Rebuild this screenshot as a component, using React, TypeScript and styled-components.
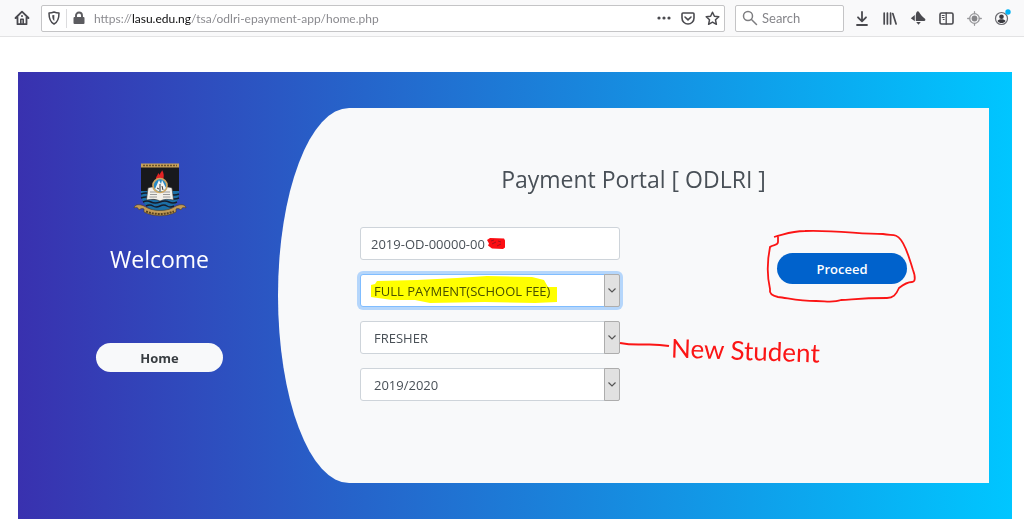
import React, { useState } from "react";
import styled, { createGlobalStyle } from "styled-components";

const GlobalStyle = createGlobalStyle`
  *, *::before, *::after { box-sizing: border-box; }
  body {
    margin: 0;
    background: #fff;
    color: #495057;
    font-family: "Open Sans", "Noto Sans", sans-serif;
  }
  button, input, select { font-family: inherit; margin: 0; }
`;

/* Browser toolbar */

const Toolbar = styled.header`
  display: flex;
  align-items: center;
  height: 37px;
  padding: 0 8px 0 11px;
  background: #f9f9fa;
  border-bottom: 1px solid #e3e3e4;
`;

const IconButton = styled.button<{ $width?: number }>`
  display: flex;
  align-items: center;
  justify-content: center;
  flex: none;
  width: ${(p) => p.$width ?? 28}px;
  height: 26px;
  padding: 0;
  border: 0;
  background: none;
  color: #4a4a4f;
`;

const BarField = styled.div`
  display: flex;
  align-items: center;
  height: 27px;
  border: 1px solid #c4c4c6;
  border-radius: 2px;
  background: #fff;
`;

const AddressBar = styled(BarField)`
  flex: 1;
  min-width: 0;
  margin-left: 8px;
`;

const SearchBar = styled(BarField)`
  flex: none;
  width: 109px;
  margin: 0 4px 0 10px;
  padding-left: 6px;
  color: #7d7d80;
`;

const Divider = styled.span`
  width: 1px;
  height: 19px;
  background: #dcdcde;
`;

const BarInput = styled.input`
  flex: 1;
  min-width: 0;
  height: 24px;
  margin-left: 4px;
  padding: 0;
  border: 0;
  outline: 0;
  background: none;
  font-family: Lato, "Open Sans", sans-serif;
  font-size: 13px;
  color: #85858a;
  &::placeholder { color: #85858a; opacity: 1; }
`;

const UrlInput = styled(BarInput)`
  font-size: 12px;
  background: linear-gradient(90deg, #85858a 38px, #0c0c0d 38px, #0c0c0d 97px, #85858a 97px);
  -webkit-background-clip: text;
  background-clip: text;
  -webkit-text-fill-color: transparent;
`;

/* Page */

const Page = styled.main`
  padding: 35px 12px 13px 18px;
`;

const Hero = styled.div`
  display: flex;
  padding: 36px 23px 36px 23px;
  background: linear-gradient(to right, #3931af, #00c6ff);
`;

const Sidebar = styled.aside`
  display: flex;
  flex-direction: column;
  align-items: center;
  flex: none;
  width: 237px;
  padding-top: 55px;
`;

const Welcome = styled.h2`
  margin: 26px 0 68px;
  color: #fff;
  font-size: 23px;
  font-weight: 400;
  line-height: 32px;
`;

const PillButton = styled.button<{ $primary?: boolean }>`
  width: ${(p) => (p.$primary ? 130 : 127)}px;
  height: ${(p) => (p.$primary ? 31 : 29)}px;
  padding: 0;
  border: 0;
  border-radius: 24px;
  background: ${(p) => (p.$primary ? "#0062cc" : "#f8f9fa")};
  color: ${(p) => (p.$primary ? "#fff" : "#383d41")};
  font-size: 13px;
  font-weight: ${(p) => (p.$primary ? 600 : 700)};
`;

const Card = styled.section`
  flex: 1;
  min-width: 0;
  padding: 55px 82px 82px;
  background: #f8f9fa;
  border-top-left-radius: 10% 50%;
  border-bottom-left-radius: 10% 50%;
`;

const Title = styled.h3`
  margin: 0 0 32px;
  color: #495057;
  font-size: 23px;
  font-weight: 400;
  line-height: 32px;
  text-align: center;
`;

const Form = styled.form`
  display: flex;
  justify-content: space-between;
  align-items: flex-start;
`;

const Fields = styled.div`
  display: grid;
  gap: 14px;
  width: 260px;
`;

const Field = styled.div`
  position: relative;
  height: 33px;
`;

const TextBox = styled.input`
  width: 100%;
  height: 33px;
  padding: 0 10px;
  border: 1px solid #ced4da;
  border-radius: 3px;
  outline: 0;
  background: #fff;
  color: #495057;
  font-size: 13px;
`;

const Select = styled.select<{ $focused?: boolean }>`
  appearance: none;
  width: 100%;
  height: 33px;
  padding: 0 24px 0 13px;
  border: 1px solid ${(p) => (p.$focused ? "#80bdff" : "#ced4da")};
  border-radius: 3px;
  outline: 0;
  box-shadow: ${(p) => (p.$focused ? "0 0 0 3px #b5d6fb" : "none")};
  background: #fff;
  color: #495057;
  font-size: 13px;
`;

const Arrow = styled.span`
  position: absolute;
  top: 0;
  right: 0;
  display: flex;
  align-items: center;
  justify-content: center;
  width: 16px;
  height: 33px;
  border: 1px solid #adadad;
  border-radius: 0 2px 2px 0;
  background: #e1e1e1;
  pointer-events: none;
`;

const ProceedArea = styled.div`
  position: relative;
  margin-top: 26px;
  display: flex;
`;

/* Pen marks lying over the form */

const Mark = styled.svg<{ $left: number; $top: number; $multiply?: boolean }>`
  position: absolute;
  left: ${(p) => p.$left}px;
  top: ${(p) => p.$top}px;
  overflow: visible;
  pointer-events: none;
  mix-blend-mode: ${(p) => (p.$multiply ? "multiply" : "normal")};
`;

const Note = styled.span`
  position: absolute;
  left: 311px;
  top: 13px;
  color: #fb1515;
  font-family: Lato, sans-serif;
  font-size: 26px;
  font-weight: 400;
  line-height: 32px;
  white-space: nowrap;
  transform: rotate(2deg);
  pointer-events: none;
`;

const line = { fill: "none", stroke: "currentColor", strokeLinecap: "round", strokeLinejoin: "round" } as const;

const HomeIcon = () => (
  <svg width="16" height="16" viewBox="0 0 16 16" {...line} strokeWidth="1.8">
    <path d="M1.5 8 8 1.7 14.5 8M3.5 7.5v6.7h9V7.5" />
    <path d="M6.8 14V9.3h2.4V14" strokeWidth="1.6" />
    <path d="M8 5.8v.4" />
  </svg>
);

const ShieldIcon = () => (
  <svg width="12" height="14" viewBox="0 0 12 14" {...line} strokeWidth="1.5">
    <path d="M6 1c1.500.6 3 .9 5 .9C11 8 9.800 11 6 13 2.200 11 1 8 1 1.900c2 0 3.500-.3 5-.9Z" />
    <path d="M6.300 4v6C4.700 9 4.200 7 4.200 4.300Z" fill="currentColor" stroke="none" />
  </svg>
);

const LockIcon = () => (
  <svg width="12" height="14" viewBox="0 0 12 14">
    <path d="M3 7V4.500a3 3 0 0 1 6 0V7" {...line} strokeWidth="1.900" stroke="#5c5c60" />
    <rect x="0.500" y="6" width="11" height="7" rx="1" fill="#5c5c60" />
  </svg>
);

const DotsIcon = () => (
  <svg width="14" height="4" viewBox="0 0 14 4" fill="currentColor">
    <circle cx="2" cy="2" r="1.600" /><circle cx="7" cy="2" r="1.600" /><circle cx="12" cy="2" r="1.600" />
  </svg>
);

const PocketIcon = () => (
  <svg width="14" height="13" viewBox="0 0 14 13" {...line} strokeWidth="1.600">
    <path d="M2 1h10a1 1 0 0 1 1 1v4a6 6 0 0 1-12 0V2a1 1 0 0 1 1-1Z" />
    <path d="M4 5l3 2.800L10 5" />
  </svg>
);

const StarIcon = () => (
  <svg width="15" height="15" viewBox="0 0 15 15" {...line} strokeWidth="1.500">
    <path d="m7.500 1.200 1.900 4.100 4.400.5-3.300 3 .9 4.500-3.900-2.200-3.900 2.200.9-4.500-3.300-3 4.400-.5Z" />
  </svg>
);

const SearchIcon = () => (
  <svg width="16" height="16" viewBox="0 0 16 16" {...line} strokeWidth="1.500">
    <circle cx="6" cy="6" r="4.500" /><path d="m9.500 9.500 5 5" />
  </svg>
);

const DownloadIcon = () => (
  <svg width="12" height="15" viewBox="0 0 12 15" {...line} strokeWidth="1.800">
    <path d="M6 1v9M2 6.300l4 4 4-4M1 14h10" />
  </svg>
);

const LibraryIcon = () => (
  <svg width="14" height="13" viewBox="0 0 14 13" {...line} strokeWidth="1.700">
    <path d="M1.200 1v11M4.400 1v11M7.600 1v11M9.800 1.500l3.300 10.500" />
  </svg>
);

const BellIcon = () => (
  <svg width="16" height="16" viewBox="0 0 16 16" fill="currentColor">
    <path d="M6.500 2.300c.6-1.300 2-1.300 2.500-.3 1.800 3 3.400 4.500 6 6.700.8.800.3 2.300-.8 2.300H5.800V5c.2-1 .3-1.900.7-2.700Z" />
    <path d="M4.800 5v6.300L.8 8.200ZM6.200 12h4.600L8.500 14.800Z" />
  </svg>
);

const SidebarIcon = () => (
  <svg width="15" height="13" viewBox="0 0 15 13" {...line} strokeWidth="1.600">
    <rect x="1" y="1" width="13" height="11" rx="1.500" />
    <path d="M7.200 1v11" strokeWidth="1.300" />
    <path d="M3.200 3.500h2M3.200 5.500h2M4.200 7.500h1" strokeWidth="1" />
  </svg>
);

const TargetIcon = () => (
  <svg width="15" height="15" viewBox="0 0 15 15" {...line} stroke="#98989b" strokeWidth="1.300">
    <circle cx="7.500" cy="7.500" r="4.800" />
    <circle cx="7.500" cy="7.500" r="2.900" fill="#858588" stroke="none" />
    <path d="M7.500.7v2M7.500 12.300v2M.7 7.500h2M12.300 7.500h2" />
  </svg>
);

const AccountIcon = () => (
  <svg width="18" height="18" viewBox="0 0 18 18">
    <circle cx="8.500" cy="9.500" r="6" fill="none" stroke="#6a6a6f" strokeWidth="1.200" />
    <circle cx="8.500" cy="7.800" r="2.300" fill="#3a3a3f" />
    <path d="M4.500 12c.7-1.300 2-1.800 4-1.800s3.300.5 4 1.800c-1 1.500-2.300 2-4 2s-3-.5-4-2Z" fill="#3a3a3f" />
    <circle cx="15" cy="3" r="2.700" fill="#00b3f4" />
  </svg>
);

const Crest = () => (
  <svg width="54" height="54" viewBox="0 0 54 54" role="img" aria-label="University crest">
    <path d="M8 4h38v26c0 10-8 17-19 20C16 47 8 40 8 30Z" fill="#18191c" />
    <path d="M8 28h38v3c0 9-7 16-19 19C15 47 8 40 8 31Z" fill="#1c6fa6" />
    <g fill="none" stroke="#171c2b" strokeWidth="1.500">
      <path d="M8 31q5-2 9 0t10 0 10 0 9 0M8 35q5-2 9 0t10 0 10 0 9 0M10 39q4-2 8 0t9 0 9 0 8 0M13 43q4-2 7 0t7 0 7 0 7 0" />
    </g>
    <path d="M8 .5h38v4H8Z" fill="#c6a05a" />
    <path d="M10 2.500h34" stroke="#6b542b" strokeWidth="1.500" strokeDasharray="2 1" />
    <path d="M23 17c-.5-4 2-4 2-7l2 2c0-3 2-3 2-5 2 3 2 6 1.500 8l-.5 3Z" fill="#e32424" />
    <path d="M15 25c5-2 9-1 12 1 3-2 7-3 12-1l1.500 12c-5-1-10-1-13.500 1-3.500-2-8.500-2-13.500-1Z" fill="#f3f0e9" stroke="#3a3a3a" strokeWidth=".6" />
    <path d="M17 29h7M17 31.500h7M16.500 34h7.500M30 29h7M30 31.500h7M30 34h7.500" stroke="#999" strokeWidth="1" />
    <circle cx="27" cy="22.500" r="7" fill="#2689c5" stroke="#cda765" strokeWidth="1.700" />
    <path d="m26 17-4 9 3 2h5l3-3-4-8-1 4Z" fill="#f4f4f0" />
    <path d="M27 21v7M24 25l2 1M29 23l1 4" stroke="#222" strokeWidth=".9" />
    <path d="M1 45c1-4 5-4 10-2 5 3 9 4.500 16 4.500S38 46 43 43c5-2 9-2 10 2-2-1-4-1-5 2-1-1-3-2-5-1v3c-9 5-23 5-32 0v-3c-2-1-4 0-5 1-1-3-3-3-5-2Z" fill="#c39b56" stroke="#4b3a22" strokeWidth=".6" />
    <path d="M13 48.500q14 5 28 0" fill="none" stroke="#57421f" strokeWidth="2" strokeDasharray="2 1" />
  </svg>
);

type DropDownProps = {
  id: string;
  label: string;
  options: string[];
  focused?: boolean;
  children?: React.ReactNode;
};

const DropDown = ({ id, label, options, focused, children }: DropDownProps) => (
  <Field>
    <Select id={id} aria-label={label} $focused={focused}>
      {options.map((o) => <option key={o}>{o}</option>)}
    </Select>
    <Arrow>
      <svg width="8" height="5" viewBox="0 0 8 5" fill="none" stroke="#555" strokeWidth="1.200"><path d="m.5.5 3.500 3.500L7.500.5" /></svg>
    </Arrow>
    {children}
  </Field>
);

export default function App() {
  const [url, setUrl] = useState("https://lasu.edu.ng/tsa/odlri-epayment-app/home.php");
  const [matric, setMatric] = useState("2019-OD-00000-00");

  return (
    <>
      <GlobalStyle />
      <Toolbar>
        <IconButton $width={22} aria-label="Home page"><HomeIcon /></IconButton>
        <AddressBar>
          <IconButton $width={24} aria-label="Tracking protection"><ShieldIcon /></IconButton>
          <Divider />
          <IconButton $width={23} aria-label="Site security"><LockIcon /></IconButton>
          <UrlInput aria-label="Address" value={url} onChange={(e) => setUrl(e.target.value)} />
          <IconButton $width={24} aria-label="Page actions"><DotsIcon /></IconButton>
          <IconButton $width={24} aria-label="Save to Pocket"><PocketIcon /></IconButton>
          <IconButton $width={24} aria-label="Bookmark"><StarIcon /></IconButton>
        </AddressBar>
        <SearchBar>
          <SearchIcon />
          <BarInput type="text" aria-label="Search" placeholder="Search" />
        </SearchBar>
        <IconButton aria-label="Downloads"><DownloadIcon /></IconButton>
        <IconButton aria-label="Library"><LibraryIcon /></IconButton>
        <IconButton aria-label="Notifications"><BellIcon /></IconButton>
        <IconButton aria-label="Sidebars"><SidebarIcon /></IconButton>
        <IconButton aria-label="Location"><TargetIcon /></IconButton>
        <IconButton aria-label="Account"><AccountIcon /></IconButton>
      </Toolbar>
      <Page>
        <Hero>
          <Sidebar>
            <Crest />
            <Welcome>Welcome</Welcome>
            <PillButton type="button">Home</PillButton>
          </Sidebar>
          <Card>
            <Title>Payment Portal [ ODLRI ]</Title>
            <Form onSubmit={(e) => e.preventDefault()}>
              <Fields>
                <Field>
                  <TextBox aria-label="Matric number" value={matric} onChange={(e) => setMatric(e.target.value)} />
                  <Mark $left={126} $top={10} width="20" height="13" viewBox="0 0 20 13">
                    <path d="M1 3 4 1l14 .5 1 2v7l-2 1.500-11-.5-4-3 1-2Z" fill="#fb0d12" />
                    <path d="M5 4l3-1M6 7l4-2M12 4l3 1M11 9l4-2" stroke="#a3131b" strokeWidth="1" />
                  </Mark>
                </Field>
                <DropDown id="payment" label="Payment type" options={["FULL PAYMENT(SCHOOL FEE)"]} focused>
                  <Mark $multiply $left={11} $top={2} width="187" height="27" viewBox="0 0 187 27">
                    <path d="M0 9 4 8l2-3 40-1 40-2 30-2 45 1 12 3 4 7h9v15l-22 1-50-1-55 1-15-3-23 0L0 21Z" fill="#ffff00" />
                  </Mark>
                </DropDown>
                <DropDown id="level" label="Student level" options={["FRESHER"]}>
                  <Mark $left={260} $top={20} width="50" height="6" viewBox="0 0 50 6">
                    <path d="M0 2q10 2 24 1.500t25 1.500" fill="none" stroke="#fb1515" strokeWidth="2" />
                  </Mark>
                  <Note>New Student</Note>
                </DropDown>
                <DropDown id="session" label="Session" options={["2019/2020"]} />
              </Fields>
              <ProceedArea>
                <PillButton $primary type="submit">Proceed</PillButton>
                <Mark $left={-11} $top={-23} width="150" height="72" viewBox="0 0 150 72">
                  <path d="M8 7C20 4 25 1 39 1c30-1 55 3 78 3 9 2 13-1 18 6 6 8 9 21 12 30 3 8 2 12-1 12-5 0-8 2-13 6-3 7-6 10-12 10-30 0-36 2-46 2-8 3-15 1-25 1-18 0-28-3-38-4-5-1-9-3-8-8C1 46 1 32 4 17c3-3 8-1 8-5V5" fill="none" stroke="#fb1515" strokeWidth="1.800" />
                </Mark>
              </ProceedArea>
            </Form>
          </Card>
        </Hero>
      </Page>
    </>
  );
}
